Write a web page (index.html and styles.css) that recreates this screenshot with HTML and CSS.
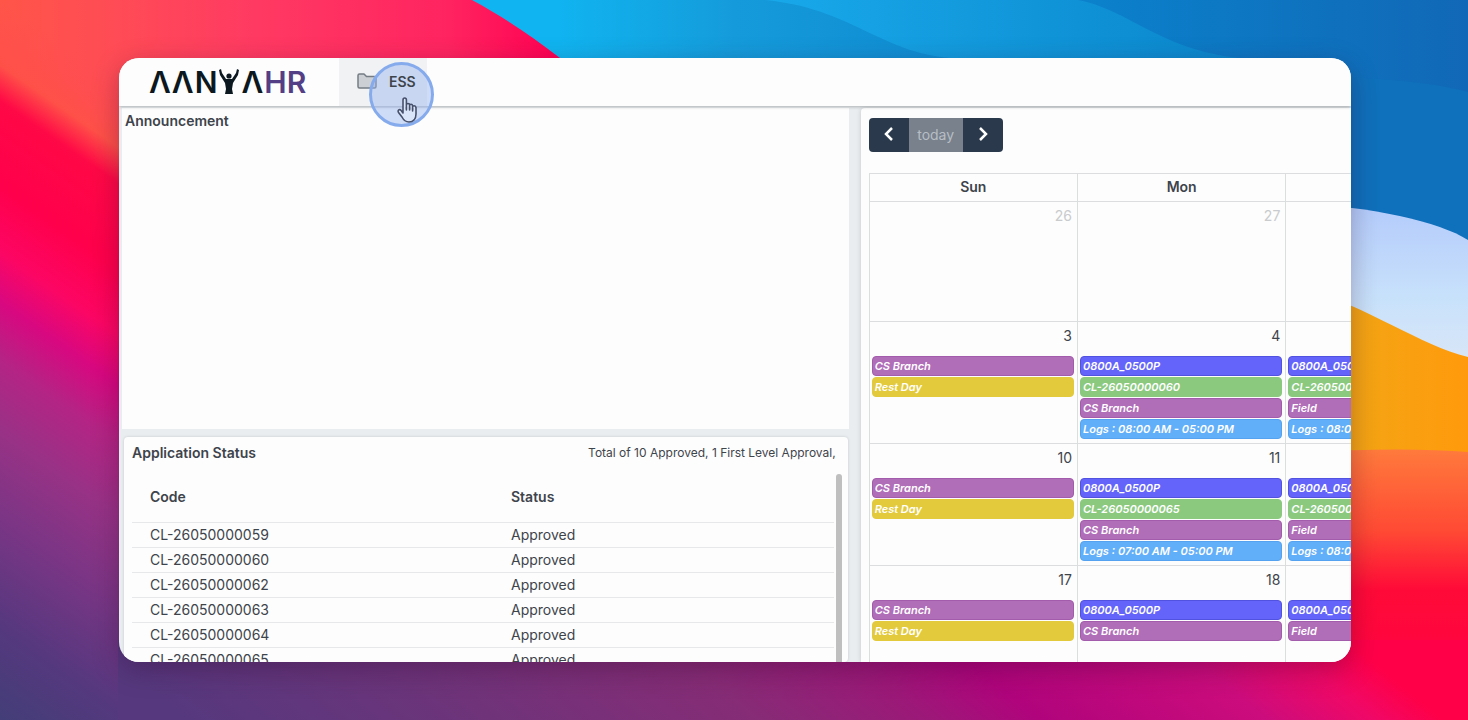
FILE: index.html
```html
<!DOCTYPE html>
<html lang="en">
<head>
    <meta charset="UTF-8">
    <meta name="viewport" content="width=device-width, initial-scale=1.0">
    <title>AanyaHR</title>
    <link rel="stylesheet" href="styles.css">
</head>
<body>
    <svg class="wallpaper" viewBox="0 0 1468 720" preserveAspectRatio="none" aria-hidden="true">
        <defs>
            <linearGradient id="blue" x1="0" y1="0" x2="1" y2="0">
                <stop offset="0.38" stop-color="#10b4f0"/>
                <stop offset="0.5" stop-color="#159bdb"/>
                <stop offset="0.75" stop-color="#0b80cb"/>
                <stop offset="1" stop-color="#1168b6"/>
            </linearGradient>
            <linearGradient id="wave" x1="0" y1="0" x2="1" y2="0">
                <stop offset="0" stop-color="#18a9ea"/>
                <stop offset="1" stop-color="#0b86cc"/>
            </linearGradient>
            <linearGradient id="white" x1="0" y1="0" x2="0" y2="1">
                <stop offset="0" stop-color="#b3cbfb"/>
                <stop offset="0.5" stop-color="#c9e2fb"/>
                <stop offset="1" stop-color="#e3e8f5"/>
            </linearGradient>
            <linearGradient id="orange" x1="0" y1="0" x2="1" y2="0">
                <stop offset="0" stop-color="#eeaa18"/>
                <stop offset="1" stop-color="#ff9a0c"/>
            </linearGradient>
            <linearGradient id="coral" x1="0" y1="0" x2="0" y2="1">
                <stop offset="0" stop-color="#ff7a3c"/>
                <stop offset="0.3" stop-color="#ff4a34"/>
                <stop offset="0.52" stop-color="#ff0a38"/>
                <stop offset="1" stop-color="#ff0048"/>
            </linearGradient>
            <linearGradient id="pink" x1="0" y1="0" x2="560" y2="0" gradientUnits="userSpaceOnUse">
                <stop offset="0" stop-color="#ff5548"/>
                <stop offset="0.2" stop-color="#ff4c55"/>
                <stop offset="0.45" stop-color="#ff3a62"/>
                <stop offset="0.8" stop-color="#ff2460"/>
                <stop offset="1" stop-color="#ff0052"/>
            </linearGradient>
            <linearGradient id="side" x1="0" y1="0" x2="-338" y2="483" gradientUnits="userSpaceOnUse">
                <stop offset="0" stop-color="#ff4c50" stop-opacity="0"/>
                <stop offset="0.09" stop-color="#ff5048"/>
                <stop offset="0.14" stop-color="#ff0846"/>
                <stop offset="0.26" stop-color="#ff004c"/>
                <stop offset="0.35" stop-color="#fc0664"/>
                <stop offset="0.42" stop-color="#d80880"/>
                <stop offset="0.5" stop-color="#b42484"/>
                <stop offset="0.6" stop-color="#983286"/>
                <stop offset="0.75" stop-color="#733684"/>
                <stop offset="0.87" stop-color="#55387e"/>
                <stop offset="1" stop-color="#433e78"/>
            </linearGradient>
            <linearGradient id="bottom" x1="118" y1="662" x2="671" y2="-2" gradientUnits="userSpaceOnUse">
                <stop offset="0" stop-color="#56387e"/>
                <stop offset="0.2" stop-color="#6c347a"/>
                <stop offset="0.42" stop-color="#862c76"/>
                <stop offset="0.55" stop-color="#9c1878"/>
                <stop offset="0.63" stop-color="#b0047c"/>
                <stop offset="0.8" stop-color="#cc0c7c"/>
                <stop offset="0.88" stop-color="#f00866"/>
                <stop offset="0.93" stop-color="#ff0048"/>
            </linearGradient>
        </defs>
        <rect width="1468" height="720" fill="url(#blue)"/>
        <path d="M765 0C850 8 880 52 950 58H1240C1160 50 1130 10 1078 0Z" fill="url(#wave)"/>
        <path d="M1351 77C1400 80 1440 84 1468 92V240C1430 220 1390 212 1351 208Z" fill="#0f70bb"/>
        <path d="M1300 204C1370 206 1440 222 1468 240V400H1300Z" fill="url(#white)"/>
        <path d="M1300 286C1370 308 1420 345 1468 357V480H1300Z" fill="url(#orange)"/>
        <path d="M1468 452Q1410 447 1300 452V720H1468Z" fill="url(#coral)"/>
        <path d="M0 0H472C505 18 530 35 560 58V200H0Z" fill="url(#pink)"/>
        <path d="M0 0H130V720H0Z" fill="url(#side)"/>
        <path d="M118 640H1468V720H118Z" fill="url(#bottom)"/>
    </svg>

    <div class="window">
        <header class="topbar">
            <a class="logo" href="#">
                <span>Λ</span><span>Λ</span><span>N</span>
                <svg class="figure" width="22" height="26" viewBox="0 0 22 26" fill="#0b1820" aria-hidden="true">
                    <circle cx="11" cy="7" r="2.600"/>
                    <path d="M1 1L3 0L4 4L8 10H14L18 4L19 0L21 1L20 6L15 14L14 20L15 25H7L8 20L7 14L2 6Z"/>
                </svg>
                <span>Λ</span><span class="hr">HR</span>
            </a>
            <nav class="menu">
                <a class="menu-item" href="#">
                    <svg width="20" height="16" viewBox="0 0 20 16" fill="#ccd0d5" stroke="#757c84" stroke-width="1.5" stroke-linejoin="round" aria-hidden="true">
                        <path d="M1 13.5V2.5Q1 1 2.5 1H7L9.5 3.5H17.5Q19 3.5 19 5V13.5Q19 15 17.5 15H2.5Q1 15 1 13.5Z"/>
                    </svg>
                    <span class="label">ESS</span>
                    <span class="pointer">
                        <svg width="20" height="26" viewBox="0 0 20 26" fill="none" stroke="#46506b" stroke-width="1.6" stroke-linejoin="round" stroke-linecap="round" aria-hidden="true">
                            <path fill="#dbe5f9" d="M6 16V3Q6 1 7.700 1T9.400 3V11V8Q9.400 6.500 11 6.500T12.600 8V11V8.500Q12.600 7.200 14 7.200T15.600 8.800V12V10Q15.600 8.700 17 8.700T19 10.500V17C19 22 16 25 12 25C8 25 6.500 23 5 20L1.500 15.500Q.500 13.500 2 12.800T4.500 14Z"/>
                            <path d="M9.400 11V13M12.600 11V13M15.600 12V14"/>
                        </svg>
                    </span>
                </a>
            </nav>
        </header>

        <main class="board">
            <div class="left">
                <section class="panel announcement">
                    <h2>Announcement</h2>
                </section>
                <section class="panel status">
                    <div class="status-head">
                        <h2>Application Status</h2>
                        <p>Total of 10 Approved, 1 First Level Approval,</p>
                    </div>
                    <div class="status-body">
                        <table class="applications">
                            <thead>
                                <tr><th>Code</th><th>Status</th></tr>
                            </thead>
                            <tbody>
                                <tr><td>CL-26050000059</td><td>Approved</td></tr>
                                <tr><td>CL-26050000060</td><td>Approved</td></tr>
                                <tr><td>CL-26050000062</td><td>Approved</td></tr>
                                <tr><td>CL-26050000063</td><td>Approved</td></tr>
                                <tr><td>CL-26050000064</td><td>Approved</td></tr>
                                <tr><td>CL-26050000065</td><td>Approved</td></tr>
                            </tbody>
                        </table>
                        <div class="scrollbar"></div>
                    </div>
                </section>
            </div>

            <section class="panel calendar">
                <div class="toolbar">
                    <button type="button" aria-label="Previous month">
                        <svg width="10" height="14" viewBox="0 0 10 14" fill="none" stroke="#fff" stroke-width="2.5" aria-hidden="true"><path d="M8 1L2 7L8 13"/></svg>
                    </button>
                    <button type="button" class="today" disabled>today</button>
                    <button type="button" aria-label="Next month">
                        <svg width="10" height="14" viewBox="0 0 10 14" fill="none" stroke="#fff" stroke-width="2.5" aria-hidden="true"><path d="M2 1L8 7L2 13"/></svg>
                    </button>
                </div>
                <table class="month">
                    <thead>
                        <tr><th>Sun</th><th>Mon</th><th></th></tr>
                    </thead>
                    <tbody>
                        <tr>
                            <td class="other"><div class="day">26</div></td>
                            <td class="other"><div class="day">27</div></td>
                            <td class="other"></td>
                        </tr>
                        <tr>
                            <td>
                                <div class="day">3</div>
                                <div class="event branch">CS Branch</div>
                                <div class="event rest">Rest Day</div>
                            </td>
                            <td>
                                <div class="day">4</div>
                                <div class="event shift">0800A_0500P</div>
                                <div class="event code">CL-26050000060</div>
                                <div class="event branch">CS Branch</div>
                                <div class="event logs">Logs : 08:00 AM - 05:00 PM</div>
                            </td>
                            <td>
                                <div class="day"></div>
                                <div class="event shift">0800A_0500P</div>
                                <div class="event code">CL-26050000</div>
                                <div class="event branch">Field</div>
                                <div class="event logs">Logs : 08:00 AM</div>
                            </td>
                        </tr>
                        <tr>
                            <td>
                                <div class="day">10</div>
                                <div class="event branch">CS Branch</div>
                                <div class="event rest">Rest Day</div>
                            </td>
                            <td>
                                <div class="day">11</div>
                                <div class="event shift">0800A_0500P</div>
                                <div class="event code">CL-26050000065</div>
                                <div class="event branch">CS Branch</div>
                                <div class="event logs">Logs : 07:00 AM - 05:00 PM</div>
                            </td>
                            <td>
                                <div class="day"></div>
                                <div class="event shift">0800A_0500P</div>
                                <div class="event code">CL-26050000</div>
                                <div class="event branch">Field</div>
                                <div class="event logs">Logs : 08:00 AM</div>
                            </td>
                        </tr>
                        <tr>
                            <td>
                                <div class="day">17</div>
                                <div class="event branch">CS Branch</div>
                                <div class="event rest">Rest Day</div>
                            </td>
                            <td>
                                <div class="day">18</div>
                                <div class="event shift">0800A_0500P</div>
                                <div class="event branch">CS Branch</div>
                            </td>
                            <td>
                                <div class="day"></div>
                                <div class="event shift">0800A_0500P</div>
                                <div class="event branch">Field</div>
                            </td>
                        </tr>
                    </tbody>
                </table>
            </section>
        </main>
    </div>
</body>
</html>
```
FILE: styles.css
```css
* {
    box-sizing: border-box;
}
body {
    font-family: Inter, "Liberation Sans", sans-serif;
    font-size: 14px;
    color: #3d444b;
    margin: 0;
    height: 100vh;
    padding: 58px 117px 58px 119px;
    overflow: hidden;
}
.wallpaper {
    position: absolute;
    top: 0;
    left: 0;
    width: 100%;
    height: 100%;
    z-index: -1;
}
.window {
    display: flex;
    flex-direction: column;
    height: 100%;
    background: #e9edf0;
    border-radius: 20px;
    overflow: hidden;
    box-shadow: 0 8px 28px rgba(40, 0, 40, 0.3);
}

/* top bar */
.topbar {
    display: flex;
    flex: none;
    height: 48px;
    padding-left: 30px;
    background: #fdfdfd;
    box-shadow: 0 1px 3px rgba(0, 0, 0, 0.25);
    position: relative;
    z-index: 1;
}
.logo {
    display: flex;
    align-items: center;
    width: 190px;
    gap: 1px;
    font-size: 30px;
    font-weight: 600;
    color: #0b1820;
    text-decoration: none;
}
.logo .hr {
    color: #533f86;
}
.menu-item {
    display: flex;
    align-items: center;
    gap: 12px;
    height: 48px;
    width: 88px;
    padding: 0 0 2px 18px;
    background: #f0f2f3;
    color: #3d444b;
    font-weight: 600;
    text-decoration: none;
    position: relative;
}
.label {
    position: relative;
    z-index: 1;
}
.pointer {
    position: absolute;
    top: 4px;
    left: 30px;
    width: 65px;
    height: 65px;
    padding: 32px 0 0 25px;
    border: 3px solid #86abed;
    border-radius: 50%;
    background: rgba(150, 180, 240, 0.45);
}
.pointer svg {
    display: block;
}

/* panels */
.board {
    display: flex;
    flex: 1;
    min-height: 0;
}
.left {
    display: flex;
    flex-direction: column;
    flex: none;
    width: 60.2%;
    padding: 2px 12px 0 3px;
    gap: 8px;
}
.panel {
    background: #fdfdfd;
}
.panel h2 {
    margin: 0;
    font-size: 14px;
    line-height: 20px;
    font-weight: 600;
}
.announcement {
    height: 321px;
    flex: none;
    padding: 3px;
}
.status {
    display: flex;
    flex-direction: column;
    flex: 1;
    min-height: 0;
    margin: 0 1px 0 2px;
    padding: 6px 6px 0 8px;
    border-radius: 4px;
    box-shadow: 0 0 3px rgba(0, 0, 0, 0.15);
}
.status-head {
    display: flex;
    justify-content: space-between;
    padding-right: 6px;
}
.status-head p {
    margin: 0;
    font-size: 12px;
    line-height: 20px;
}
.status-body {
    display: flex;
    flex: 1;
    min-height: 0;
    gap: 2px;
    padding-top: 11px;
}
.applications {
    width: 100%;
    align-self: flex-start;
    table-layout: fixed;
    border-collapse: collapse;
}
.applications th,
.applications td {
    height: 25px;
    padding: 0 0 0 18px;
    line-height: 20px;
    text-align: left;
    border-bottom: 1px solid #e6e8ea;
}
.applications th {
    height: 48px;
    padding-bottom: 2px;
    font-weight: 600;
}
.applications th:first-child {
    width: 361px;
}
.scrollbar {
    flex: none;
    width: 6px;
    border-radius: 3px 3px 0 0;
    background: #bfbfbf;
}

/* calendar */
.calendar {
    flex: 1;
    min-width: 0;
    margin-top: 2px;
    padding: 10px 0 0 8px;
    border-radius: 4px 0 0 0;
    overflow: hidden;
    box-shadow: 0 0 5px rgba(0, 0, 0, 0.15);
}
.toolbar {
    display: flex;
    width: 134px;
    height: 34px;
    margin-bottom: 21px;
    border-radius: 4px;
    overflow: hidden;
}
.toolbar button {
    display: flex;
    align-items: center;
    justify-content: center;
    width: 40px;
    padding: 0 0 2px;
    border: none;
    background: #2a3a4c;
    color: #fff;
    font-family: inherit;
    font-size: 14px;
    cursor: pointer;
}
.toolbar .today {
    width: 54px;
    background: #78818c;
    color: #b7bdc5;
}
.month {
    width: 626px;
    table-layout: fixed;
    border-collapse: collapse;
}
.month th,
.month td {
    border: 1px solid #dcdddf;
    padding: 0 3px 0 2px;
    vertical-align: top;
}
.month th {
    height: 28px;
    padding: 0 0 2px;
    vertical-align: middle;
    font-weight: 600;
}
.month td {
    height: 122px;
}
.month .other {
    height: 120px;
}
.day {
    height: 34px;
    padding: 4px 2px 0 0;
    line-height: 20px;
    text-align: right;
}
.other .day {
    color: #c9cbcd;
}
.event {
    height: 20px;
    margin-bottom: 1px;
    padding: 0 2px;
    border: 1px solid;
    border-radius: 4px;
    color: #fff;
    font-size: 11px;
    line-height: 18px;
    font-weight: 600;
    font-style: italic;
    white-space: nowrap;
    overflow: hidden;
}
.branch {
    background: #b06db8;
    border-color: #a35cab;
}
.rest {
    background: #e3ca3c;
    border-color: #e3ca3c;
}
.shift {
    background: #6464fb;
    border-color: #5252e0;
}
.code {
    background: #8bc97f;
    border-color: #8bc97f;
}
.logs {
    background: #61aef9;
    border-color: #55a3f0;
}
```
